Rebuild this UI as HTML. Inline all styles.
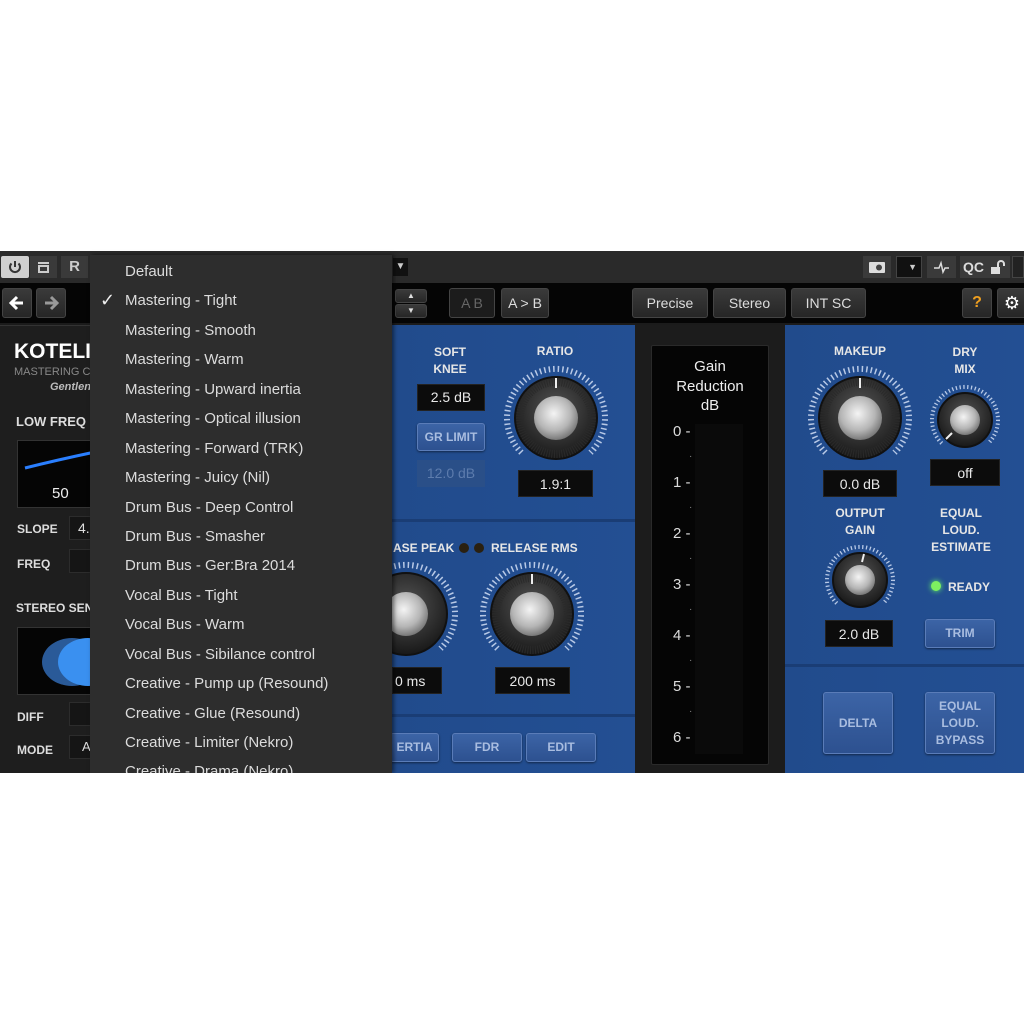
<!DOCTYPE html>
<html><head><meta charset="utf-8"><style>
*{margin:0;padding:0;box-sizing:border-box}
body{width:1024px;height:1024px;background:#fff;position:relative;overflow:hidden;font-family:"Liberation Sans","DejaVu Sans",sans-serif}
.a{position:absolute}
.t{position:absolute;color:#e6e6e6;font-weight:bold;font-size:12px;text-align:center;line-height:17px;white-space:nowrap}
.btn{position:absolute;background:linear-gradient(#3a3a3a,#262626);border:1px solid #444;border-radius:3px;color:#ddd;font-size:14px;text-align:center}
.lcd{position:absolute;background:#0c0c0c;border:1px solid #222;color:#e8e8e8;font-size:14px;text-align:center}
.bb{position:absolute;background:linear-gradient(#3c64a6,#2d5190);border:1px solid #5a7cb8;border-radius:3px;color:#a9bde0;font-size:12px;font-weight:bold;text-align:center;box-shadow:0 1px 2px rgba(0,0,0,.5)}
.mi{position:absolute;left:125px;color:#dcdcdc;font-size:15px;line-height:18px;white-space:nowrap}
</style></head><body>
<div class="a" style="left:0;top:251px;width:1024px;height:522px;background:#1b1b1b"></div>
<div class="a" style="left:0;top:251px;width:1024px;height:32px;background:#2a2a2a"></div>
<div class="a" style="left:0;top:283px;width:1024px;height:40px;background:#050505"></div>
<div class="a" style="left:1px;top:256px;width:28px;height:22px;background:#cfcfcf;border-radius:2px"><svg width="28" height="22"><path d="M10.5 7.5 A5 5 0 1 0 17.5 7.5" stroke="#333" stroke-width="2" fill="none"/><line x1="14" y1="5" x2="14" y2="11" stroke="#333" stroke-width="2"/></svg></div>
<div class="a" style="left:30px;top:256px;width:27px;height:22px;background:#3a3a3a"><svg width="27" height="22"><rect x="8" y="6" width="11" height="2" fill="#ccc"/><rect x="9" y="10" width="9" height="6" fill="none" stroke="#ccc" stroke-width="2"/></svg></div>
<div class="a" style="left:61px;top:256px;width:27px;height:22px;background:#3a3a3a;color:#ccc;font-size:15px;text-align:center;line-height:22px;font-weight:bold">R</div>
<div class="btn" style="left:2px;top:288px;width:30px;height:30px"><svg width="28" height="28"><path d="M20 14 H9 M14 8 L8 14 L14 20" stroke="#fff" stroke-width="3" fill="none"/></svg></div>
<div class="btn" style="left:36px;top:288px;width:30px;height:30px"><svg width="28" height="28"><path d="M8 14 H19 M14 8 L20 14 L14 20" stroke="#999" stroke-width="3" fill="none"/></svg></div>
<div class="a" style="left:393px;top:258px;width:15px;height:18px;background:#111;color:#ccc;font-size:10px;line-height:18px;text-align:center">▼</div>
<div class="btn" style="left:395px;top:289px;width:32px;height:14px;font-size:8px;line-height:12px">▲</div>
<div class="btn" style="left:395px;top:304px;width:32px;height:14px;font-size:8px;line-height:12px">▼</div>
<div class="btn" style="left:449px;top:288px;width:46px;height:30px;line-height:28px;color:#666;background:#1c1c1c">A B</div>
<div class="btn" style="left:501px;top:288px;width:48px;height:30px;line-height:28px">A &gt; B</div>
<div class="btn" style="left:632px;top:288px;width:76px;height:30px;line-height:28px">Precise</div>
<div class="btn" style="left:713px;top:288px;width:73px;height:30px;line-height:28px">Stereo</div>
<div class="btn" style="left:791px;top:288px;width:75px;height:30px;line-height:28px">INT SC</div>
<div class="btn" style="left:962px;top:288px;width:30px;height:30px;line-height:28px;color:#f0a020;font-weight:bold;font-size:16px">?</div>
<div class="btn" style="left:997px;top:288px;width:30px;height:30px;line-height:28px;color:#fff;font-size:18px">⚙</div>
<div class="a" style="left:863px;top:256px;width:28px;height:22px;background:#3a3a3a"><svg width="28" height="22"><rect x="6" y="6" width="16" height="11" rx="1" fill="#ddd"/><circle cx="16" cy="11.5" r="3" fill="#444"/></svg></div>
<div class="a" style="left:896px;top:256px;width:26px;height:22px;background:#111;border:1px solid #444;color:#ccc;font-size:9px;text-align:right;padding-right:4px;line-height:20px">▼</div>
<div class="a" style="left:927px;top:256px;width:29px;height:22px;background:#3a3a3a"><svg width="29" height="22"><path d="M7 12 H12 L14 7 L16 16 L18 12 H22" stroke="#ddd" stroke-width="1.5" fill="none"/></svg></div>
<div class="a" style="left:960px;top:256px;width:50px;height:22px;background:#3a3a3a;color:#ddd;font-size:14px;font-weight:bold;line-height:22px;padding-left:3px">QC</div>
<svg class="a" style="left:988px;top:258px" width="20" height="18"><rect x="3" y="9" width="9" height="7" fill="#ddd"/><path d="M10 9 V6 A3 3 0 0 1 16 6 V8" stroke="#ddd" stroke-width="2" fill="none"/></svg>
<div class="a" style="left:1012px;top:256px;width:12px;height:22px;background:#222;border:1px solid #444"></div>
<!-- left panel -->
<div class="a" style="left:0;top:325px;width:90px;height:448px;background:#1e1e1e;border-top:1px solid #333"></div>
<div class="a" style="left:14px;top:340px;color:#fff;font-size:21px;font-weight:bold">KOTELI</div>
<div class="a" style="left:14px;top:366px;color:#888;font-size:11px">MASTERING C</div>
<div class="a" style="left:50px;top:381px;color:#bbb;font-size:11px;font-style:italic;font-weight:bold">Gentlen</div>
<div class="a" style="left:16px;top:414px;color:#ddd;font-size:13px;font-weight:bold">LOW FREQ R</div>
<div class="a" style="left:17px;top:440px;width:80px;height:68px;background:#050505;border:1px solid #333"></div>
<svg class="a" style="left:17px;top:440px" width="80" height="40"><path d="M8 28 Q40 20 78 12" stroke="#2a7fff" stroke-width="3" fill="none"/></svg>
<div class="a" style="left:52px;top:485px;color:#eee;font-size:15px">50</div>
<div class="a" style="left:17px;top:522px;color:#ddd;font-size:12px;font-weight:bold">SLOPE</div>
<div class="a" style="left:69px;top:516px;width:30px;height:24px;background:#151515;border:1px solid #2c2c2c;color:#ddd;font-size:14px;padding:3px 0 0 8px">4.</div>
<div class="a" style="left:17px;top:557px;color:#ddd;font-size:12px;font-weight:bold">FREQ</div>
<div class="a" style="left:69px;top:549px;width:30px;height:24px;background:#151515;border:1px solid #2c2c2c"></div>
<div class="a" style="left:16px;top:601px;color:#ddd;font-size:12px;font-weight:bold">STEREO SEN</div>
<div class="a" style="left:17px;top:627px;width:80px;height:68px;background:#050505;border:1px solid #333;overflow:hidden"><div class="a" style="left:24px;top:10px;width:60px;height:48px;border-radius:50%;background:#2a5a98"></div><div class="a" style="left:40px;top:10px;width:60px;height:48px;border-radius:50%;background:#3a90f0"></div></div>
<div class="a" style="left:17px;top:710px;color:#ddd;font-size:12px;font-weight:bold">DIFF</div>
<div class="a" style="left:69px;top:702px;width:30px;height:24px;background:#151515;border:1px solid #2c2c2c"></div>
<div class="a" style="left:17px;top:743px;color:#ddd;font-size:12px;font-weight:bold">MODE</div>
<div class="a" style="left:69px;top:735px;width:30px;height:24px;background:#151515;border:1px solid #2c2c2c;color:#ddd;font-size:13px;padding:3px 0 0 12px">A</div>
<!-- blue sections -->
<div class="a" style="left:392px;top:325px;width:243px;height:448px;background:linear-gradient(90deg,#214b8c,#234f93)"></div>
<div class="a" style="left:392px;top:519px;width:243px;height:3px;background:#1a3d75"></div>
<div class="a" style="left:392px;top:714px;width:243px;height:3px;background:#1a3d75"></div>
<div class="a" style="left:785px;top:325px;width:239px;height:448px;background:linear-gradient(90deg,#214b8c,#234f93)"></div>
<div class="a" style="left:785px;top:664px;width:239px;height:3px;background:#1a3d75"></div>
<div class="a" style="left:635px;top:325px;width:150px;height:448px;background:#1c1c1c"></div>
<div class="a" style="left:651px;top:345px;width:118px;height:420px;background:#050505;border:1px solid #2a2a2a;border-radius:2px"></div>
<div class="a" style="left:695px;top:424px;width:48px;height:330px;background:#0a0a0a"></div>
<div class="t" style="left:651px;top:357px;width:118px;font-size:15px;line-height:19.5px;font-weight:normal;color:#eee">Gain<br>Reduction<br>dB</div>
<div class="a" style="left:673px;top:406px;color:#ddd;font-size:15px;line-height:51px;white-space:pre">0 -
1 -
2 -
3 -
4 -
5 -
6 -</div>
<div class="a" style="left:689px;top:431px;color:#888;font-size:10px;line-height:51px;white-space:pre">·
·
·
·
·
·</div>
<!-- labels -->
<div class="t" style="left:420px;top:344px;width:60px">SOFT<br>KNEE</div>
<div class="t" style="left:525px;top:343px;width:60px">RATIO</div>
<div class="lcd" style="left:417px;top:384px;width:68px;height:27px;line-height:25px">2.5 dB</div>
<div class="bb" style="left:417px;top:423px;width:68px;height:28px;line-height:26px">GR LIMIT</div>
<div class="lcd" style="left:417px;top:460px;width:68px;height:27px;line-height:25px;background:#2a4f88;border-color:#2a4f88;color:#5d7cad">12.0 dB</div>
<div class="lcd" style="left:518px;top:470px;width:75px;height:27px;line-height:27px">1.9:1</div>
<div class="a" style="left:392px;top:530px;width:243px;height:30px;overflow:hidden">
<div class="t" style="left:1px;top:10px;text-align:left">ASE PEAK</div>
<div class="a" style="left:67px;top:13px;width:10px;height:10px;border-radius:50%;background:#2a2010"></div>
<div class="a" style="left:82px;top:13px;width:10px;height:10px;border-radius:50%;background:#2a2010"></div>
<div class="t" style="left:99px;top:10px;text-align:left">RELEASE RMS</div>
</div>
<div class="lcd" style="left:392px;top:667px;width:50px;height:27px;line-height:27px;text-align:left;padding-left:2px">0 ms</div>
<div class="lcd" style="left:495px;top:667px;width:75px;height:27px;line-height:27px">200 ms</div>
<div class="bb" style="left:390px;top:733px;width:49px;height:29px;line-height:27px">ERTIA</div>
<div class="bb" style="left:452px;top:733px;width:70px;height:29px;line-height:27px">FDR</div>
<div class="bb" style="left:526px;top:733px;width:70px;height:29px;line-height:27px">EDIT</div>
<div class="t" style="left:820px;top:343px;width:80px">MAKEUP</div>
<div class="t" style="left:930px;top:344px;width:70px">DRY<br>MIX</div>
<div class="lcd" style="left:823px;top:470px;width:74px;height:27px;line-height:27px">0.0 dB</div>
<div class="lcd" style="left:930px;top:459px;width:70px;height:27px;line-height:27px">off</div>
<div class="t" style="left:820px;top:505px;width:80px">OUTPUT<br>GAIN</div>
<div class="t" style="left:920px;top:505px;width:82px">EQUAL<br>LOUD.<br>ESTIMATE</div>
<div class="a" style="left:931px;top:581px;width:10px;height:10px;border-radius:50%;background:#7ef060;box-shadow:0 0 6px #6f6"></div>
<div class="t" style="left:948px;top:579px;width:50px;text-align:left">READY</div>
<div class="lcd" style="left:825px;top:620px;width:68px;height:27px;line-height:27px">2.0 dB</div>
<div class="bb" style="left:925px;top:619px;width:70px;height:29px;line-height:27px">TRIM</div>
<div class="bb" style="left:823px;top:692px;width:70px;height:62px;line-height:60px">DELTA</div>
<div class="bb" style="left:925px;top:692px;width:70px;height:62px;line-height:17px;padding-top:5px">EQUAL<br>LOUD.<br>BYPASS</div>
<!-- knobs -->
<svg class="a" style="left:0;top:0" width="1024" height="1024">
<defs>
<radialGradient id="cap" cx="45%" cy="40%" r="65%"><stop offset="0" stop-color="#f4f4f4"/><stop offset=".6" stop-color="#b5b5b5"/><stop offset="1" stop-color="#6a6a6a"/></radialGradient>
<radialGradient id="bod" cx="50%" cy="40%" r="60%"><stop offset="0" stop-color="#555"/><stop offset="1" stop-color="#181818"/></radialGradient>
</defs>
<g transform="translate(556,418)">
<path d="M-34.6 34.6 A49 49 0 1 1 34.6 34.6" fill="none" stroke="#b8c9e6" stroke-width="6" stroke-dasharray="1.5 3"/>
<circle r="41" fill="url(#bod)" stroke="#111" stroke-width="2"/>
<circle r="36" fill="none" stroke="#2a2a2a" stroke-width="8" stroke-dasharray="1 1.5"/>
<circle r="22" fill="url(#cap)"/>
<line x1="0" y1="-40" x2="0" y2="-30" stroke="#eee" stroke-width="2"/>
</g>
<g transform="translate(860,418)">
<path d="M-34.6 34.6 A49 49 0 1 1 34.6 34.6" fill="none" stroke="#b8c9e6" stroke-width="6" stroke-dasharray="1.5 3"/>
<circle r="41" fill="url(#bod)" stroke="#111" stroke-width="2"/>
<circle r="36" fill="none" stroke="#2a2a2a" stroke-width="8" stroke-dasharray="1 1.5"/>
<circle r="22" fill="url(#cap)"/>
<line x1="0" y1="-40" x2="0" y2="-30" stroke="#eee" stroke-width="2"/>
</g>
<g transform="translate(532,614)">
<path d="M-34.6 34.6 A49 49 0 1 1 34.6 34.6" fill="none" stroke="#b8c9e6" stroke-width="6" stroke-dasharray="1.5 3"/>
<circle r="41" fill="url(#bod)" stroke="#111" stroke-width="2"/>
<circle r="36" fill="none" stroke="#2a2a2a" stroke-width="8" stroke-dasharray="1 1.5"/>
<circle r="22" fill="url(#cap)"/>
<line x1="0" y1="-40" x2="0" y2="-30" stroke="#eee" stroke-width="2"/>
</g>
<g transform="translate(406,614)">
<path d="M-34.6 34.6 A49 49 0 1 1 34.6 34.6" fill="none" stroke="#b8c9e6" stroke-width="6" stroke-dasharray="1.5 3"/>
<circle r="41" fill="url(#bod)" stroke="#111" stroke-width="2"/>
<circle r="22" fill="url(#cap)"/>
</g>
<g transform="translate(965,420)">
<path d="M-23.3 23.3 A33 33 0 1 1 23.3 23.3" fill="none" stroke="#b8c9e6" stroke-width="4" stroke-dasharray="1.3 2.5"/>
<circle r="27" fill="url(#bod)" stroke="#111" stroke-width="2"/>
<circle r="15" fill="url(#cap)"/>
<line x1="-19" y1="19" x2="-13" y2="13" stroke="#eee" stroke-width="2"/>
</g>
<g transform="translate(860,580)">
<path d="M-23.3 23.3 A33 33 0 1 1 23.3 23.3" fill="none" stroke="#b8c9e6" stroke-width="4" stroke-dasharray="1.3 2.5"/>
<circle r="27" fill="url(#bod)" stroke="#111" stroke-width="2"/>
<circle r="15" fill="url(#cap)"/>
<line x1="4" y1="-26" x2="2" y2="-18" stroke="#eee" stroke-width="2"/>
</g>
</svg>
<!-- dropdown menu -->
<div class="a" style="left:90px;top:255px;width:302px;height:518px;background:#2d2d2d;box-shadow:2px 0 4px rgba(0,0,0,.5);overflow:hidden">
<div class="a" style="left:10px;top:35px;color:#eee;font-size:18px">✓</div>
</div>
<div class="mi" style="top:263px">Default</div>
<div class="mi" style="top:292px">Mastering - Tight</div>
<div class="mi" style="top:322px">Mastering - Smooth</div>
<div class="mi" style="top:351px">Mastering - Warm</div>
<div class="mi" style="top:381px">Mastering - Upward inertia</div>
<div class="mi" style="top:410px">Mastering - Optical illusion</div>
<div class="mi" style="top:440px">Mastering - Forward (TRK)</div>
<div class="mi" style="top:469px">Mastering - Juicy (Nil)</div>
<div class="mi" style="top:499px">Drum Bus - Deep Control</div>
<div class="mi" style="top:528px">Drum Bus - Smasher</div>
<div class="mi" style="top:557px">Drum Bus - Ger:Bra 2014</div>
<div class="mi" style="top:587px">Vocal Bus - Tight</div>
<div class="mi" style="top:616px">Vocal Bus - Warm</div>
<div class="mi" style="top:646px">Vocal Bus - Sibilance control</div>
<div class="mi" style="top:675px">Creative - Pump up (Resound)</div>
<div class="mi" style="top:705px">Creative - Glue (Resound)</div>
<div class="mi" style="top:734px">Creative - Limiter (Nekro)</div>
<div class="a" style="left:90px;top:755px;width:302px;height:18px;overflow:hidden"><div class="mi" style="top:8px;left:35px">Creative - Drama (Nekro)</div></div>
<div class="a" style="left:0;top:773px;width:1024px;height:251px;background:#fff"></div>
</body></html>
